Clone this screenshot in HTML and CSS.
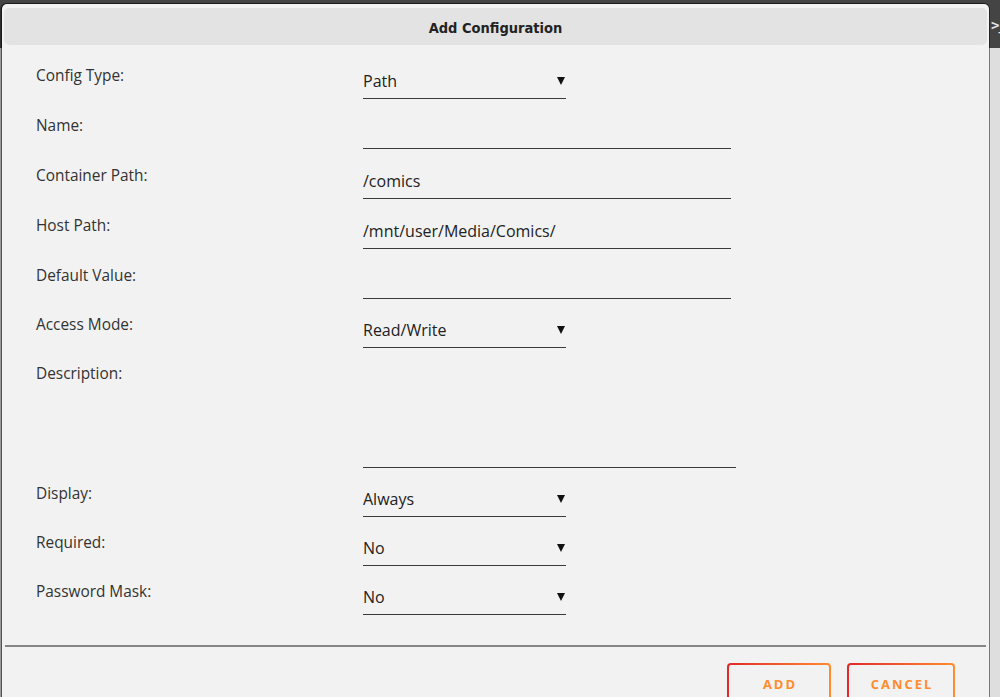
FILE: index.html
```html
<!DOCTYPE html>
<html>
    <head>
        <title>Add Configuration</title>
        <link rel="stylesheet" href="styles.css">
    </head>
<body>
    <div class="topbar">
        <span class="term">&gt;_</span>
    </div>
    <div class="content"></div>

    <div class="dialog">
        <div class="dialog-title">Add Configuration</div>

        <form class="config-form">
            <div class="row">
                <label for="cfg_type">Config Type:</label>
                <div class="select-wrap">
                    <select id="cfg_type" class="field select">
                        <option>Path</option>
                        <option>Port</option>
                        <option>Variable</option>
                        <option>Label</option>
                        <option>Device</option>
                    </select>
                </div>
            </div>

            <div class="row">
                <label for="cfg_name">Name:</label>
                <input type="text" id="cfg_name" class="field text" value="">
            </div>

            <div class="row">
                <label for="cfg_target">Container Path:</label>
                <input type="text" id="cfg_target" class="field text" value="/comics">
            </div>

            <div class="row">
                <label for="cfg_value">Host Path:</label>
                <input type="text" id="cfg_value" class="field text" value="/mnt/user/Media/Comics/">
            </div>

            <div class="row tight">
                <label for="cfg_default">Default Value:</label>
                <input type="text" id="cfg_default" class="field text" value="">
            </div>

            <div class="row tight">
                <label for="cfg_mode">Access Mode:</label>
                <div class="select-wrap">
                    <select id="cfg_mode" class="field select">
                        <option>Read/Write</option>
                        <option>Read Only</option>
                    </select>
                </div>
            </div>

            <div class="row tight tall">
                <label for="cfg_desc">Description:</label>
                <textarea id="cfg_desc" class="field area"></textarea>
            </div>

            <div class="row tight">
                <label for="cfg_display">Display:</label>
                <div class="select-wrap">
                    <select id="cfg_display" class="field select">
                        <option>Always</option>
                        <option>Advanced</option>
                    </select>
                </div>
            </div>

            <div class="row tight">
                <label for="cfg_required">Required:</label>
                <div class="select-wrap">
                    <select id="cfg_required" class="field select">
                        <option>No</option>
                        <option>Yes</option>
                    </select>
                </div>
            </div>

            <div class="row tight">
                <label for="cfg_mask">Password Mask:</label>
                <div class="select-wrap">
                    <select id="cfg_mask" class="field select">
                        <option>No</option>
                        <option>Yes</option>
                    </select>
                </div>
            </div>
        </form>

        <div class="button-pane">
            <button type="button" class="button">ADD</button>
            <button type="button" class="button cancel">CANCEL</button>
        </div>
    </div>
</body>
</html>
```

FILE: styles.css
```css
body {
    margin: 0;
    height: 697px;
    overflow: hidden;
    background-color: #dedede;
    font-family: "Open Sans", "DejaVu Sans", sans-serif;
    color: #333;
}

.topbar {
    height: 48px;
    background-color: #444;
    display: flex;
    align-items: center;
}

.term {
    margin-left: 991px;
    margin-top: 2px;
    color: #e6e6e6;
    font-family: "DejaVu Sans Mono", monospace;
    font-weight: bold;
    font-size: 14px;
    letter-spacing: -1px;
    white-space: nowrap;
}

/* dialog floats over the page */
.dialog {
    position: absolute;
    top: 4px;
    left: 2px;
    width: 987px;
    height: 720px;
    background-color: #f2f2f2;
    border-radius: 5px 5px 0 0;
    box-shadow: 0 0 0 1px rgba(0, 0, 0, 0.45), -1px 0 0 1px rgba(0, 0, 0, 0.3);
}

.dialog-title {
    margin: 4px 2px 0;
    height: 37px;
    line-height: 40px;
    background-color: #e3e3e3;
    border-radius: 5px;
    text-align: center;
    font-family: "DejaVu Sans Condensed", "Liberation Sans Narrow", "DejaVu Sans", sans-serif;
    font-stretch: condensed;
    font-weight: bold;
    font-size: 14.5px;
    color: #222;
}

.config-form {
    padding: 15px 0 0 34px;
}

.row {
    display: grid;
    grid-template-columns: 327px auto;
    align-items: start;
    height: 50px;
}

.row.tight {
    height: 49px;
}

.row.tall {
    height: 120px;
}

.row label {
    padding-top: 6px;
    line-height: 20px;
    font-size: 15.4px;
    color: #333;
}

.field {
    display: block;
    box-sizing: content-box;
    margin: 9px 0 0;
    padding: 2px 0 7px;
    height: 20px;
    line-height: 20px;
    border: none;
    border-bottom: 1px solid #3a3a3a;
    border-radius: 0;
    background: transparent;
    font-family: "Open Sans", "DejaVu Sans", sans-serif;
    font-size: 16px;
    color: #222;
    outline: none;
}

.text {
    width: 368px;
}

.area {
    width: 373px;
    height: 91px;
    resize: none;
}

.select-wrap {
    position: relative;
    width: 203px;
}

.select {
    width: 203px;
    appearance: none;
    -webkit-appearance: none;
}

.select-wrap::after {
    content: "";
    position: absolute;
    top: 17px;
    right: 1px;
    border-left: 4px solid transparent;
    border-right: 4px solid transparent;
    border-top: 8px solid #111;
    pointer-events: none;
}

.button-pane {
    margin: 20px 3px 0;
    border-top: 2px solid #858585;
    padding: 16px 31px 0 0;
    display: flex;
    justify-content: flex-end;
    gap: 16px;
}

.button {
    height: 42px;
    width: 104px;
    padding: 0;
    border: 2px solid transparent;
    border-radius: 4px;
    background: linear-gradient(#f2f2f2, #f2f2f2) padding-box,
                linear-gradient(90deg, #e22828, #ff8c2f) border-box;
    color: #ff8c2f;
    font-family: "Open Sans", "DejaVu Sans", sans-serif;
    font-weight: bold;
    font-size: 13px;
    letter-spacing: 2px;
    text-indent: 2px;
    cursor: pointer;
}

.button.cancel {
    width: 108px;
}
```
